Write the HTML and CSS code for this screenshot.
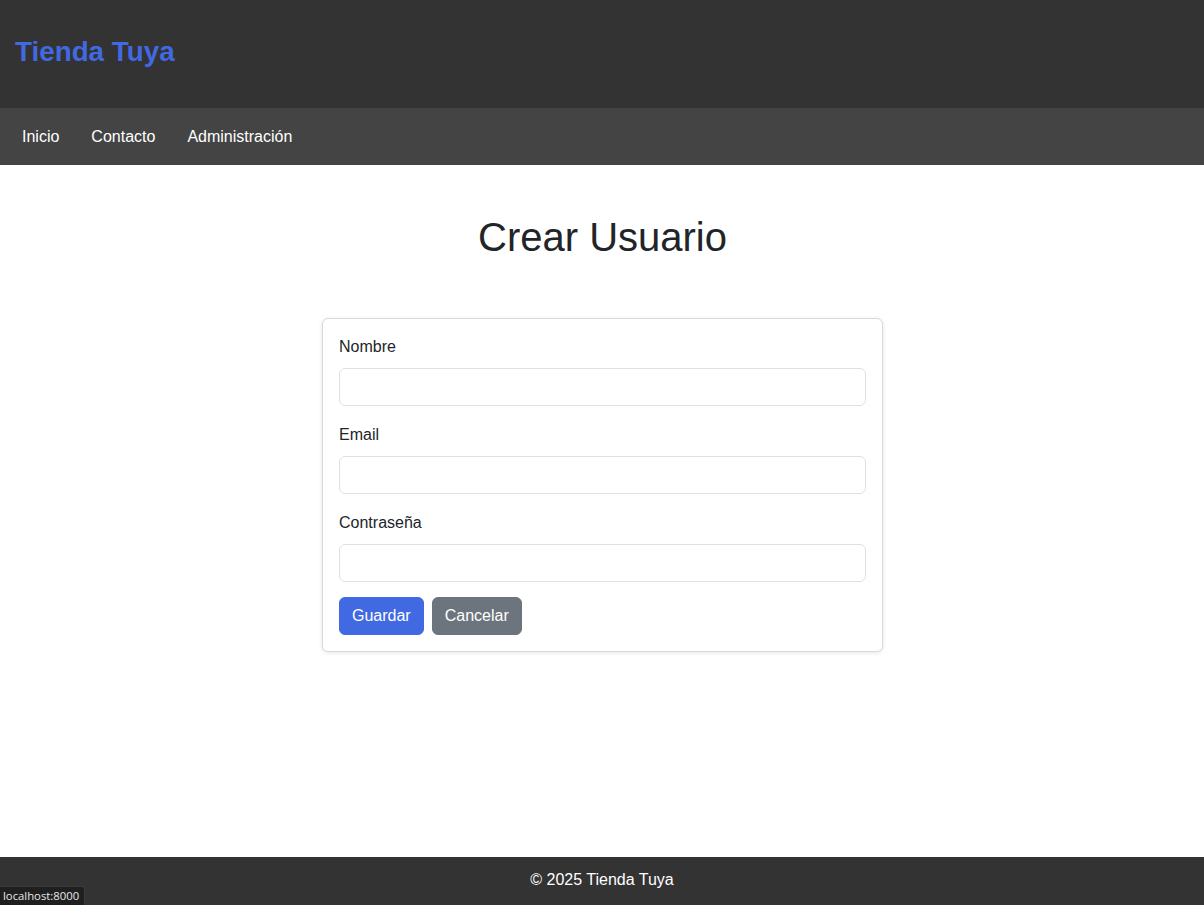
FILE: index.html
```html
<!DOCTYPE html>
<html lang="es">
<head>
<meta charset="utf-8">
<title>Crear Usuario - Tienda Tuya</title>
<link rel="stylesheet" href="styles.css">
</head>
<body>
<div class="page">
  <header class="site-header">
    <h1 class="brand">Tienda Tuya</h1>
  </header>
  <nav class="site-nav">
    <a href="#" class="nav-link">Inicio</a>
    <a href="#" class="nav-link">Contacto</a>
    <a href="#" class="nav-link">Administración</a>
  </nav>
  <main class="main">
    <h2 class="page-title">Crear Usuario</h2>
    <form class="card">
      <div class="field">
        <label class="field-label" for="nombre">Nombre</label>
        <input class="field-input" id="nombre" type="text">
      </div>
      <div class="field">
        <label class="field-label" for="email">Email</label>
        <input class="field-input" id="email" type="email">
      </div>
      <div class="field field-last">
        <label class="field-label" for="pass">Contraseña</label>
        <input class="field-input" id="pass" type="password">
      </div>
      <div class="actions">
        <button type="button" class="btn btn-primary">Guardar</button>
        <button type="button" class="btn btn-secondary">Cancelar</button>
      </div>
    </form>
  </main>
  <footer class="site-footer">© 2025 Tienda Tuya</footer>
</div>
<div class="status-bar">localhost:8000</div>
</body>
</html>
```
FILE: styles.css
```css
* { box-sizing: border-box; }
html, body { margin: 0; padding: 0; }
body {
  font-family: "Liberation Sans", Arial, sans-serif;
  font-size: 16px;
  line-height: 1.5;
  color: #212529;
  background: #fff;
}
.page {
  min-height: 100vh;
  display: flex;
  flex-direction: column;
}
.site-header {
  background: #333333;
  height: 108px;
  display: flex;
  align-items: center;
  padding: 0 15px;
}
.brand {
  margin: 0;
  font-size: 27.8px;
  font-weight: bold;
  color: #4169e1;
  line-height: 1.2;
  position: relative;
  top: -2px;
}
.site-nav {
  background: #444444;
  height: 57px;
  display: flex;
  align-items: center;
  padding: 0 6px;
}
.nav-link {
  color: #fff;
  text-decoration: none;
  padding: 0 16px;
  font-size: 16px;
  line-height: 24px;
}
.main {
  flex: 1;
  display: flex;
  flex-direction: column;
  align-items: center;
  padding: 48px 19px 40px 20px;
}
.page-title {
  margin: 0 0 57px;
  font-size: 40px;
  font-weight: normal;
  line-height: 1.2;
  color: #212529;
}
.card {
  width: 561px;
  border: 1px solid #d9d9d9;
  border-radius: 6px;
  box-shadow: 0 1px 4px rgba(0,0,0,0.1);
  padding: 15px 16px 16px;
  background: #fff;
}
.field {
  display: flex;
  flex-direction: column;
  margin-bottom: 16px;
}
.field-last { margin-bottom: 15px; }
.field-label {
  padding-top: 1px;
  margin-bottom: 9px;
  line-height: 24px;
}
.field-input {
  height: 38px;
  border: 1px solid #dee2e6;
  border-radius: 6px;
  padding: 6px 12px;
  font: inherit;
  width: 100%;
}
.actions {
  display: flex;
  gap: 8px;
}
.btn {
  font: inherit;
  font-size: 16px;
  line-height: 24px;
  padding: 6px 12px;
  border: 1px solid transparent;
  border-radius: 6px;
  color: #fff;
  cursor: pointer;
}
.btn-primary { background: #4169e1; border-color: #4169e1; }
.btn-secondary { background: #6c757d; border-color: #6c757d; }
.site-footer {
  background: #333333;
  color: #fff;
  height: 48px;
  display: flex;
  align-items: center;
  justify-content: center;
  font-size: 16px;
  padding-bottom: 2px;
}
.status-bar {
  position: fixed;
  left: 0;
  bottom: 0;
  background: #1f1f1f;
  color: #e8e8e8;
  font-family: "Open Sans", "DejaVu Sans", sans-serif;
  font-size: 11.3px;
  line-height: 16px;
  padding: 1px 5px 1px 3px;
  border-top-right-radius: 3px;
  border-top: 1px solid #3a3a3a;
  border-right: 1px solid #3a3a3a;
}
```
